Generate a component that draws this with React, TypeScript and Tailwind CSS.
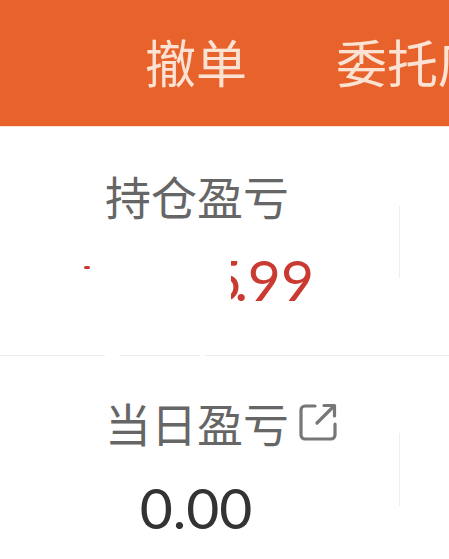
import React from 'react';

const cjk = "font-['Noto_Sans_CJK_SC',sans-serif]";
const digits = "font-['Lato','Noto_Sans_CJK_SC',sans-serif]";

function ShareIcon() {
    return (
        <svg width="38" height="38" viewBox="0 0 38 38" fill="none" stroke="#777777" strokeWidth="3.2" strokeLinecap="round" strokeLinejoin="round">
            <path d="M16 3H6a4 4 0 0 0-4 4v25a4 4 0 0 0 4 4h26a4 4 0 0 0 4-4V21" />
            <path d="M18 20 35 3" />
            <path d="M25 2.500h10.500V13" />
        </svg>
    );
}

export default function App() {
    return (
        <div className={`w-[449px] h-[559px] overflow-hidden bg-white ${cjk}`}>
            {/* Header */}
            <header className="h-[127px] bg-[#e8622c] border-b border-[#fbe3d6] flex items-center pl-[145px] pb-[3px] gap-[89px] whitespace-nowrap text-[51px] leading-none text-[#fbe2d3]">
                <span>撤单</span>
                <span>委托店</span>
            </header>

            {/* Holding P&L */}
            <section className="relative h-[229px] border-b border-[#eeeeee] flex">
                <div className="w-[392px] pt-[40px]">
                    <div className="pl-[105px] text-[46px] leading-[56px] text-[#666666]">持仓盈亏</div>
                    <div className={`mt-[24px] pr-[78px] text-right text-[57px] leading-[64px] text-[#c93a31] ${digits}`}>
                        123<span className="tracking-[-8px]">5</span>.99
                    </div>
                </div>
                <div className="ml-[7px] mt-[79px] w-px h-[72px] bg-[#eeeeee]"></div>
                {/* white patch over the amount */}
                <div className="absolute left-[60px] top-[128px] w-[171px] h-[100px] bg-white"></div>
                <div className="absolute left-[84px] top-[139px] w-[6px] h-[3px] rounded-full bg-[#c93a31]"></div>
                {/* small gaps in the divider */}
                <div className="absolute left-[105px] top-[228px] w-[15px] h-px bg-white"></div>
                <div className="absolute left-[200px] top-[228px] w-[5px] h-px bg-white"></div>
            </section>

            {/* Daily P&L */}
            <section className="flex">
                <div className="w-[392px] pt-[38px]">
                    <div className="pl-[105px] flex items-center gap-[10px] text-[46px] leading-[56px] text-[#666666]">
                        <span>当日盈亏</span>
                        <ShareIcon />
                    </div>
                    <div className={`mt-[25px] text-center text-[57px] leading-[64px] text-[#333333] ${digits}`}>0.00</div>
                </div>
                <div className="ml-[7px] mt-[77px] w-px h-[73px] bg-[#eeeeee]"></div>
            </section>
        </div>
    );
}
